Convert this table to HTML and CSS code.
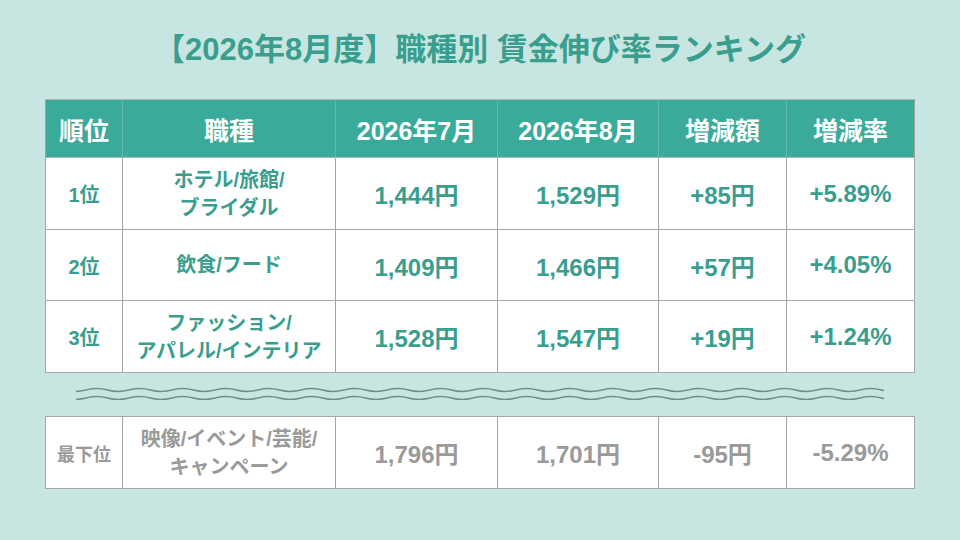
FILE: index.html
```html
<!DOCTYPE html>
<html lang="ja">
<head>
<meta charset="utf-8">
<title>職種別 賃金伸び率ランキング</title>
<link rel="stylesheet" href="styles.css">
</head>
<body>
<div class="page">
  <h1 class="title">【2026年8月度】職種別 賃金伸び率ランキング</h1>
  <table class="rank">
    <colgroup>
      <col class="c-rank"><col class="c-job"><col class="c-m7"><col class="c-m8"><col class="c-diff"><col class="c-rate">
    </colgroup>
    <thead>
      <tr><th>順位</th><th>職種</th><th>2026年7月</th><th>2026年8月</th><th>増減額</th><th>増減率</th></tr>
    </thead>
    <tbody>
      <tr class="r1"><td class="rk">1位</td><td class="job">ホテル/旅館/<br>ブライダル</td><td>1,444円</td><td>1,529円</td><td>+85円</td><td>+5.89%</td></tr>
      <tr class="r2"><td class="rk">2位</td><td class="job">飲食/フード</td><td>1,409円</td><td>1,466円</td><td>+57円</td><td>+4.05%</td></tr>
      <tr class="r3"><td class="rk">3位</td><td class="job">ファッション/<br>アパレル/インテリア</td><td>1,528円</td><td>1,547円</td><td>+19円</td><td>+1.24%</td></tr>
    </tbody>
  </table>
  <svg class="wave" width="808" height="18" viewBox="0 0 808 18" aria-hidden="true">
    <defs>
      <pattern id="wv" width="43" height="18" patternUnits="userSpaceOnUse" x="10">
        <path d="M0,8 Q10.75,5 21.5,8 T43,8 M0,16 Q10.75,13 21.5,16 T43,16" fill="none" stroke="#6c8d89" stroke-width="1.5"/>
      </pattern>
    </defs>
    <rect x="0" y="0" width="808" height="18" fill="url(#wv)"/>
  </svg>
  <table class="rank last">
    <colgroup>
      <col class="c-rank"><col class="c-job"><col class="c-m7"><col class="c-m8"><col class="c-diff"><col class="c-rate">
    </colgroup>
    <tbody>
      <tr class="rl"><td class="rk small">最下位</td><td class="job">映像/イベント/芸能/<br>キャンペーン</td><td>1,796円</td><td>1,701円</td><td>-95円</td><td>-5.29%</td></tr>
    </tbody>
  </table>
</div>
</body>
</html>
```
FILE: styles.css
```css
html, body {
  margin: 0;
  padding: 0;
}
body {
  width: 960px;
  height: 540px;
  overflow: hidden;
  background: #c8e6e1;
  font-family: "Liberation Sans", "Noto Sans CJK JP", sans-serif;
}
.page {
  display: flex;
  flex-direction: column;
  align-items: center;
  padding-top: 30px;
}
.title {
  margin: 0 0 29px;
  font-size: 31px;
  line-height: 40px;
  font-weight: bold;
  color: #3a9e8f;
  letter-spacing: 0;
}
.rank {
  width: 869px;
  border-collapse: collapse;
  table-layout: fixed;
  background: #fff;
}
.c-rank { width: 77px; }
.c-job { width: 213px; }
.c-m7 { width: 162px; }
.c-m8 { width: 161px; }
.c-diff { width: 128px; }
.c-rate { width: 128px; }
.rank th {
  height: 57px;
  padding: 0;
  background: #3aab9b;
  color: #fff;
  font-size: 25px;
  font-weight: bold;
  border: 1px solid #a9b9b6;
  border-left-color: #5fb8ab;
  border-right-color: #5fb8ab;
}
.rank th:first-child { border-left-color: #a0a0a0; }
.rank th:last-child { border-right-color: #a0a0a0; }
.rank td {
  height: 71px;
  padding: 0;
  text-align: center;
  vertical-align: middle;
  border: 1px solid #a6a6a6;
  color: #3a9e8f;
  font-size: 24px;
  font-weight: bold;
}
.rank td.rk { font-size: 20px; }
.rank td.job {
  font-size: 20px;
  line-height: 28px;
}
.rank .r2 td { height: 70px; }
.wave {
  display: block;
  margin: 9px 0 16px;
}
.rank.last td { color: #9a9a9a; }
.rank.last td.small { font-size: 18px; }
.rank.last td.job { font-size: 20px; }
```
